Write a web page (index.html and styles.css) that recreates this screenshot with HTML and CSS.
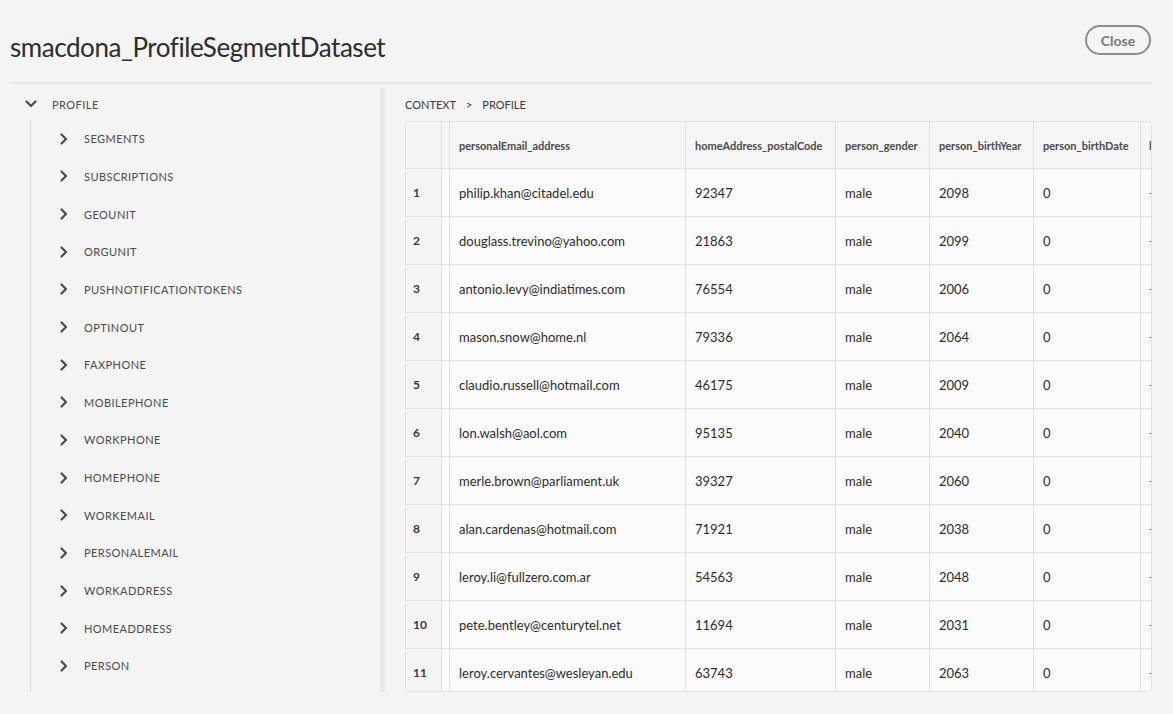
FILE: index.html
```html
<!DOCTYPE html>
<html>
<head>
<meta charset="utf-8">
<link rel="stylesheet" href="styles.css">
</head>
<body>
<header class="header">
  <h1 class="title">smacdona_ProfileSegmentDataset</h1>
  <button class="close-btn">Close</button>
</header>
<main class="main">
  <nav class="tree">
    <div class="tree-root">
      <svg class="chev-down" width="12" height="8" viewBox="0 0 12 8"><path d="M1.5 1.5 L6 6 L10.5 1.5" fill="none" stroke="#4b4b4b" stroke-width="2.2" stroke-linecap="round" stroke-linejoin="round"/></svg>
      <span class="tree-label">PROFILE</span>
    </div>
    <ul class="tree-children">
      <li class="tree-item"><svg class="chev-right" width="8" height="12" viewBox="0 0 8 12"><path d="M1.5 1.5 L6 6 L1.5 10.5" fill="none" stroke="#4b4b4b" stroke-width="2.2" stroke-linecap="round" stroke-linejoin="round"/></svg><span class="tree-label">SEGMENTS</span></li>
      <li class="tree-item"><svg class="chev-right" width="8" height="12" viewBox="0 0 8 12"><path d="M1.5 1.5 L6 6 L1.5 10.5" fill="none" stroke="#4b4b4b" stroke-width="2.2" stroke-linecap="round" stroke-linejoin="round"/></svg><span class="tree-label">SUBSCRIPTIONS</span></li>
      <li class="tree-item"><svg class="chev-right" width="8" height="12" viewBox="0 0 8 12"><path d="M1.5 1.5 L6 6 L1.5 10.5" fill="none" stroke="#4b4b4b" stroke-width="2.2" stroke-linecap="round" stroke-linejoin="round"/></svg><span class="tree-label">GEOUNIT</span></li>
      <li class="tree-item"><svg class="chev-right" width="8" height="12" viewBox="0 0 8 12"><path d="M1.5 1.5 L6 6 L1.5 10.5" fill="none" stroke="#4b4b4b" stroke-width="2.2" stroke-linecap="round" stroke-linejoin="round"/></svg><span class="tree-label">ORGUNIT</span></li>
      <li class="tree-item"><svg class="chev-right" width="8" height="12" viewBox="0 0 8 12"><path d="M1.5 1.5 L6 6 L1.5 10.5" fill="none" stroke="#4b4b4b" stroke-width="2.2" stroke-linecap="round" stroke-linejoin="round"/></svg><span class="tree-label">PUSHNOTIFICATIONTOKENS</span></li>
      <li class="tree-item"><svg class="chev-right" width="8" height="12" viewBox="0 0 8 12"><path d="M1.5 1.5 L6 6 L1.5 10.5" fill="none" stroke="#4b4b4b" stroke-width="2.2" stroke-linecap="round" stroke-linejoin="round"/></svg><span class="tree-label">OPTINOUT</span></li>
      <li class="tree-item"><svg class="chev-right" width="8" height="12" viewBox="0 0 8 12"><path d="M1.5 1.5 L6 6 L1.5 10.5" fill="none" stroke="#4b4b4b" stroke-width="2.2" stroke-linecap="round" stroke-linejoin="round"/></svg><span class="tree-label">FAXPHONE</span></li>
      <li class="tree-item"><svg class="chev-right" width="8" height="12" viewBox="0 0 8 12"><path d="M1.5 1.5 L6 6 L1.5 10.5" fill="none" stroke="#4b4b4b" stroke-width="2.2" stroke-linecap="round" stroke-linejoin="round"/></svg><span class="tree-label">MOBILEPHONE</span></li>
      <li class="tree-item"><svg class="chev-right" width="8" height="12" viewBox="0 0 8 12"><path d="M1.5 1.5 L6 6 L1.5 10.5" fill="none" stroke="#4b4b4b" stroke-width="2.2" stroke-linecap="round" stroke-linejoin="round"/></svg><span class="tree-label">WORKPHONE</span></li>
      <li class="tree-item"><svg class="chev-right" width="8" height="12" viewBox="0 0 8 12"><path d="M1.5 1.5 L6 6 L1.5 10.5" fill="none" stroke="#4b4b4b" stroke-width="2.2" stroke-linecap="round" stroke-linejoin="round"/></svg><span class="tree-label">HOMEPHONE</span></li>
      <li class="tree-item"><svg class="chev-right" width="8" height="12" viewBox="0 0 8 12"><path d="M1.5 1.5 L6 6 L1.5 10.5" fill="none" stroke="#4b4b4b" stroke-width="2.2" stroke-linecap="round" stroke-linejoin="round"/></svg><span class="tree-label">WORKEMAIL</span></li>
      <li class="tree-item"><svg class="chev-right" width="8" height="12" viewBox="0 0 8 12"><path d="M1.5 1.5 L6 6 L1.5 10.5" fill="none" stroke="#4b4b4b" stroke-width="2.2" stroke-linecap="round" stroke-linejoin="round"/></svg><span class="tree-label">PERSONALEMAIL</span></li>
      <li class="tree-item"><svg class="chev-right" width="8" height="12" viewBox="0 0 8 12"><path d="M1.5 1.5 L6 6 L1.5 10.5" fill="none" stroke="#4b4b4b" stroke-width="2.2" stroke-linecap="round" stroke-linejoin="round"/></svg><span class="tree-label">WORKADDRESS</span></li>
      <li class="tree-item"><svg class="chev-right" width="8" height="12" viewBox="0 0 8 12"><path d="M1.5 1.5 L6 6 L1.5 10.5" fill="none" stroke="#4b4b4b" stroke-width="2.2" stroke-linecap="round" stroke-linejoin="round"/></svg><span class="tree-label">HOMEADDRESS</span></li>
      <li class="tree-item"><svg class="chev-right" width="8" height="12" viewBox="0 0 8 12"><path d="M1.5 1.5 L6 6 L1.5 10.5" fill="none" stroke="#4b4b4b" stroke-width="2.2" stroke-linecap="round" stroke-linejoin="round"/></svg><span class="tree-label">PERSON</span></li>
    </ul>
  </nav>
  <div class="splitter"></div>
  <section class="content">
    <div class="breadcrumb"><span>CONTEXT</span><span class="sep">&gt;</span><span>PROFILE</span></div>
    <div class="table-wrap">
      <table class="grid">
        <colgroup>
          <col class="c-idx"><col class="c-thin"><col class="c-email"><col class="c-postal"><col class="c-gender"><col class="c-year"><col class="c-date"><col class="c-more">
        </colgroup>
        <thead>
          <tr><th class="idx"></th><th class="thin"></th><th>personalEmail_address</th><th>homeAddress_postalCode</th><th>person_gender</th><th>person_birthYear</th><th>person_birthDate</th><th class="more">h</th></tr>
        </thead>
        <tbody>
          <tr><td class="idx">1</td><td class="thin"></td><td>philip.khan@citadel.edu</td><td>92347</td><td>male</td><td>2098</td><td>0</td><td class="more">-</td></tr>
          <tr><td class="idx">2</td><td class="thin"></td><td>douglass.trevino@yahoo.com</td><td>21863</td><td>male</td><td>2099</td><td>0</td><td class="more">-</td></tr>
          <tr><td class="idx">3</td><td class="thin"></td><td>antonio.levy@indiatimes.com</td><td>76554</td><td>male</td><td>2006</td><td>0</td><td class="more">-</td></tr>
          <tr><td class="idx">4</td><td class="thin"></td><td>mason.snow@home.nl</td><td>79336</td><td>male</td><td>2064</td><td>0</td><td class="more">-</td></tr>
          <tr><td class="idx">5</td><td class="thin"></td><td>claudio.russell@hotmail.com</td><td>46175</td><td>male</td><td>2009</td><td>0</td><td class="more">-</td></tr>
          <tr><td class="idx">6</td><td class="thin"></td><td>lon.walsh@aol.com</td><td>95135</td><td>male</td><td>2040</td><td>0</td><td class="more">-</td></tr>
          <tr><td class="idx">7</td><td class="thin"></td><td>merle.brown@parliament.uk</td><td>39327</td><td>male</td><td>2060</td><td>0</td><td class="more">-</td></tr>
          <tr><td class="idx">8</td><td class="thin"></td><td>alan.cardenas@hotmail.com</td><td>71921</td><td>male</td><td>2038</td><td>0</td><td class="more">-</td></tr>
          <tr><td class="idx">9</td><td class="thin"></td><td>leroy.li@fullzero.com.ar</td><td>54563</td><td>male</td><td>2048</td><td>0</td><td class="more">-</td></tr>
          <tr><td class="idx">10</td><td class="thin"></td><td>pete.bentley@centurytel.net</td><td>11694</td><td>male</td><td>2031</td><td>0</td><td class="more">-</td></tr>
          <tr><td class="idx">11</td><td class="thin"></td><td>leroy.cervantes@wesleyan.edu</td><td>63743</td><td>male</td><td>2063</td><td>0</td><td class="more">-</td></tr>
        </tbody>
      </table>
    </div>
  </section>
</main>
</body>
</html>
```

FILE: styles.css
```css
* { box-sizing: border-box; }
html, body {
  margin: 0;
  padding: 0;
  background: #f4f4f4;
  font-family: Lato, "Open Sans", "Liberation Sans", sans-serif;
  color: #2c2c2c;
  overflow: hidden;
}
.header {
  display: flex;
  justify-content: space-between;
  align-items: flex-start;
  margin: 0 21px 0 10px;
  height: 84px;
  border-bottom: 2px solid #e6e6e6;
}
.title {
  margin: 30px 0 0 0;
  font-size: 26px;
  font-weight: 400;
  line-height: 34px;
  color: #2c2c2c;
  letter-spacing: -0.45px;
}
.close-btn {
  margin-top: 25px;
  width: 66px;
  height: 30px;
  border: 2px solid #8c8c8c;
  border-radius: 15px;
  background: transparent;
  font-family: inherit;
  font-size: 14px;
  font-weight: 700;
  color: #767676;
  padding: 0;
  margin-right: 1px;
}
.main {
  display: flex;
  height: 608px;
  margin-top: 4px;
}
.tree {
  width: 380px;
  flex: none;
  height: 604px;
  overflow: hidden;
}
.tree-root {
  display: flex;
  align-items: center;
  height: 32px;
  padding-left: 25px;
}
.chev-down { margin-right: 15px; }
.tree-label {
  font-size: 11px;
  letter-spacing: 0.45px;
  color: #4b4b4b;
}
.tree-children {
  list-style: none;
  margin: 0 0 0 30px;
  padding: 0;
  border-left: 1px solid #d8d8d8;
  height: 572px;
}
.tree-item {
  display: flex;
  align-items: center;
  height: 37.65px;
  padding-left: 29px;
}
.chev-right { margin-right: 16px; }
.splitter {
  width: 5px;
  flex: none;
  height: 604px;
  background: #e8e8e8;
}
.content {
  flex: 1;
  padding: 0 21px 0 20px;
  min-width: 0;
}
.breadcrumb {
  height: 33px;
  display: flex;
  align-items: center;
  font-size: 11px;
  color: #3a3a3a;
  padding-bottom: 1px;
}
.breadcrumb .sep { margin: 0 10px; }
.table-wrap {
  height: 571px;
  border: 1px solid #e1e1e1;
  border-radius: 4px;
  overflow: hidden;
  background: #fafafa;
}
.grid {
  table-layout: fixed;
  border-collapse: collapse;
  width: 747px;
  margin: -1px 0 0 -1px;
}
.c-idx { width: 36px; }
.c-thin { width: 8px; }
.c-email { width: 236px; }
.c-postal { width: 150px; }
.c-gender { width: 94px; }
.c-year { width: 104px; }
.c-date { width: 107px; }
.c-more { width: 12px; }
.grid th, .grid td {
  border: 1px solid #e1e1e1;
  padding: 0 9px;
  text-align: left;
  white-space: nowrap;
  overflow: hidden;
}
.grid th {
  height: 47px;
  background: #f5f5f5;
  font-size: 11px;
  font-weight: 700;
  color: #4b4b4b;
}
.grid td {
  height: 48px;
  font-size: 13px;
  color: #2c2c2c;
  background: #fbfbfb;
}
.grid .more {
  padding: 0 0 0 8px;
  text-overflow: clip;
}
.grid .idx {
  background: #f4f4f4;
  font-size: 12px;
  font-weight: 700;
  padding: 0 7px;
  color: #3a3a3a;
}
.grid .thin {
  padding: 0;
  background: #fbfbfb;
}
.grid th.thin { background: #f5f5f5; }
```
